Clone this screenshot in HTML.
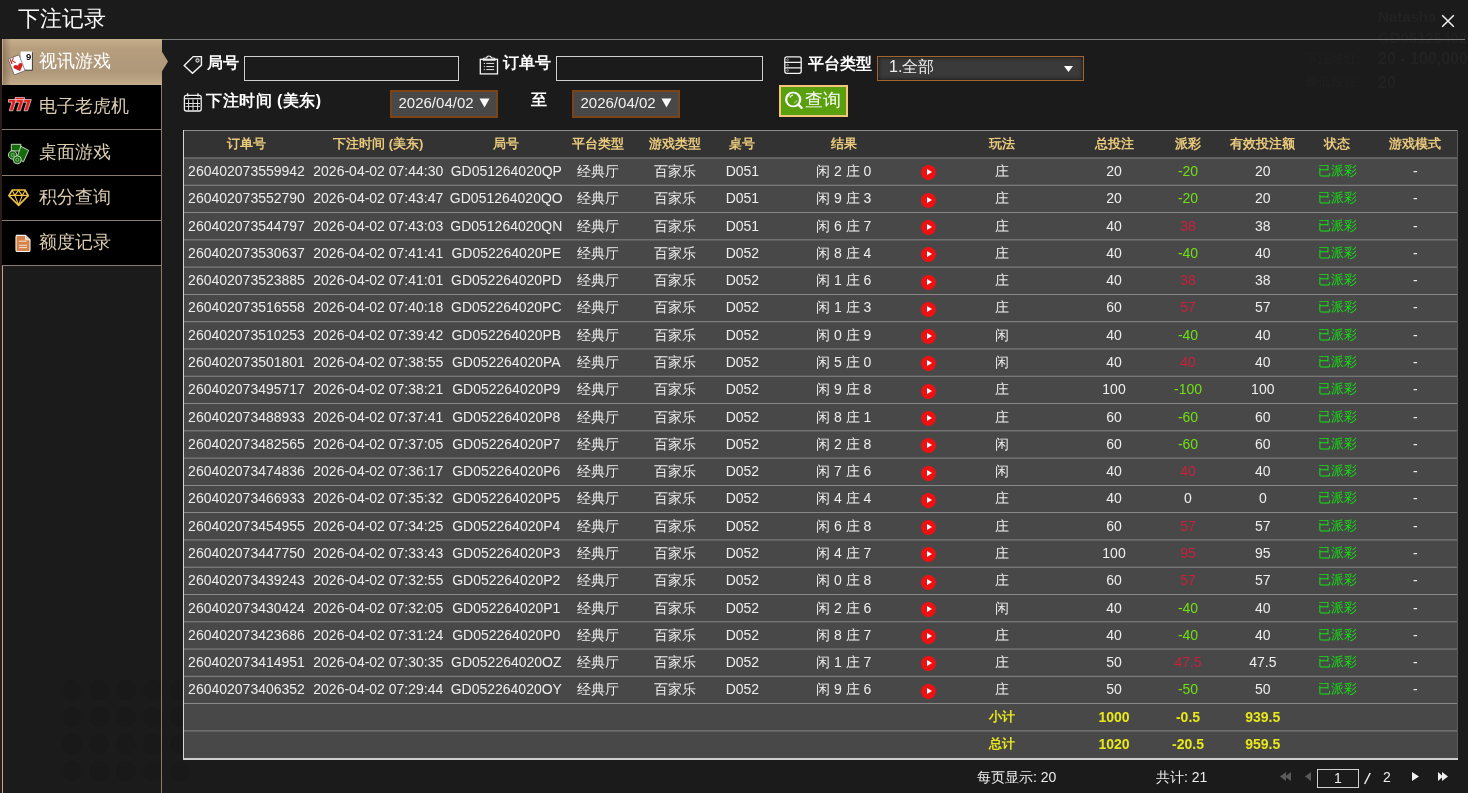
<!DOCTYPE html>
<html><head><meta charset="utf-8">
<style>
*{box-sizing:border-box}
html,body{margin:0;padding:0}
body{width:1468px;height:793px;overflow:hidden;position:relative;background:#1b1b1b;
 font-family:"Liberation Sans",sans-serif;color:#fff}
.a{position:absolute}
.c{position:absolute;width:200px;text-align:center;font-size:14px;line-height:16px;white-space:pre;color:#eee;font-weight:500}
.h{color:#e9c97c;font-weight:bold;font-size:13px}
.g{color:#6ee014}
.r{color:#c8203c}
.st{color:#14e014;font-size:13px}
.y{color:#e8e81a;font-weight:bold}
.yc{font-size:13px}
.menu{position:absolute;left:2px;width:159px;background:#000;font-size:18px;color:#dccdb0;font-weight:500}
.menu span{position:absolute;left:37px;top:0;line-height:20px}
.lbl{position:absolute;font-size:16px;font-weight:bold;color:#fff;line-height:18px;white-space:pre}
.inp{position:absolute;border:1px solid #cfcfcf;background:transparent}
.date{position:absolute;border:2px solid #7c4416;background:#484848;color:#f2f2f2;font-size:14px;line-height:16px}
.play{position:absolute;width:15px;height:15px;border-radius:50%;background:#ef1111}
.play:after{content:"";position:absolute;left:6px;top:4px;border-left:5px solid #fff;border-top:3.5px solid transparent;border-bottom:3.5px solid transparent}
</style></head><body><div id="w" style="position:absolute;left:0;top:0;width:1468px;height:793px;will-change:transform">

<div class="a" style="left:1378px;top:8px;font-size:15px;line-height:18px;font-weight:bold;color:#222222">Natasha</div>
<div class="a" style="left:1378px;top:29px;font-size:15px;line-height:18px;font-weight:bold;color:#202020">GD05126402</div>
<div class="a" style="left:1378px;top:50px;font-size:16px;line-height:18px;font-weight:bold;color:#222222">20 - 100,000</div>
<div class="a" style="left:1378px;top:74px;font-size:16px;line-height:18px;font-weight:bold;color:#222222">20</div>
<div class="a" style="left:1305px;top:50px;font-size:13px;line-height:18px;color:#202020">下注限红:</div>
<div class="a" style="left:1305px;top:73px;font-size:13px;line-height:18px;color:#202020">最低投注:</div>
<div class="a" style="left:62px;top:680px;width:20px;height:20px;border-radius:50%;background:#191919"></div>
<div class="a" style="left:89px;top:680px;width:20px;height:20px;border-radius:50%;background:#191919"></div>
<div class="a" style="left:116px;top:680px;width:20px;height:20px;border-radius:50%;background:#191919"></div>
<div class="a" style="left:143px;top:680px;width:20px;height:20px;border-radius:50%;background:#191919"></div>
<div class="a" style="left:170px;top:680px;width:20px;height:20px;border-radius:50%;background:#191919"></div>
<div class="a" style="left:62px;top:707px;width:20px;height:20px;border-radius:50%;background:#191919"></div>
<div class="a" style="left:89px;top:707px;width:20px;height:20px;border-radius:50%;background:#191919"></div>
<div class="a" style="left:116px;top:707px;width:20px;height:20px;border-radius:50%;background:#191919"></div>
<div class="a" style="left:143px;top:707px;width:20px;height:20px;border-radius:50%;background:#191919"></div>
<div class="a" style="left:170px;top:707px;width:20px;height:20px;border-radius:50%;background:#191919"></div>
<div class="a" style="left:62px;top:734px;width:20px;height:20px;border-radius:50%;background:#191919"></div>
<div class="a" style="left:89px;top:734px;width:20px;height:20px;border-radius:50%;background:#191919"></div>
<div class="a" style="left:116px;top:734px;width:20px;height:20px;border-radius:50%;background:#191919"></div>
<div class="a" style="left:143px;top:734px;width:20px;height:20px;border-radius:50%;background:#191919"></div>
<div class="a" style="left:170px;top:734px;width:20px;height:20px;border-radius:50%;background:#191919"></div>
<div class="a" style="left:62px;top:761px;width:20px;height:20px;border-radius:50%;background:#191919"></div>
<div class="a" style="left:89px;top:761px;width:20px;height:20px;border-radius:50%;background:#191919"></div>
<div class="a" style="left:116px;top:761px;width:20px;height:20px;border-radius:50%;background:#191919"></div>
<div class="a" style="left:143px;top:761px;width:20px;height:20px;border-radius:50%;background:#191919"></div>
<div class="a" style="left:170px;top:761px;width:20px;height:20px;border-radius:50%;background:#191919"></div>
<div class="a" style="left:18px;top:4.6px;font-size:22.4px;line-height:28px;color:#f8f8f8;font-weight:500">下注记录</div>
<svg class="a" style="left:1440px;top:14px" width="15" height="15" viewBox="0 0 15 15"><path d="M2.2 1.2L13.8 12.8M13.8 1.2L2.2 12.8" stroke="#f2f2f2" stroke-width="1.5"/></svg>
<div class="a" style="left:0;top:39px;width:2px;height:754px;background:#2a1d1a"></div>
<div class="a" style="left:2px;top:39px;width:1px;height:754px;background:#bfa98a"></div>
<div class="a" style="left:162px;top:39px;width:1303px;height:1px;background:#7d7d7d"></div>
<div class="a" style="left:161px;top:85px;width:1px;height:708px;background:#8b7a66"></div>
<div class="menu" style="top:85px;height:44px"><span style="top:11.0px">电子老虎机</span></div>
<div class="a" style="left:2px;top:129px;width:159px;height:1px;background:#8a7d6e"></div>
<div class="menu" style="top:130px;height:45px"><span style="top:11.5px">桌面游戏</span></div>
<div class="a" style="left:2px;top:175px;width:159px;height:1px;background:#8a7d6e"></div>
<div class="menu" style="top:176px;height:44px"><span style="top:11.0px">积分查询</span></div>
<div class="a" style="left:2px;top:220px;width:159px;height:1px;background:#8a7d6e"></div>
<div class="menu" style="top:221px;height:44px"><span style="top:11.0px">额度记录</span></div>
<div class="a" style="left:2px;top:265px;width:159px;height:1px;background:#8a7d6e"></div>
<div class="a" style="left:3px;top:39px;width:159px;height:46px;background:linear-gradient(90deg,rgba(80,60,40,.35) 0px,rgba(80,60,40,0) 8px),linear-gradient(180deg,#c7ae8c 0%,#b59d7d 22%,#af987a 70%,#c2aa8a 100%)"></div>
<svg class="a" style="left:161px;top:50px" width="8" height="23" viewBox="0 0 8 23"><path d="M0 0L7 11.5L0 23Z" fill="#b29a7b"/></svg>
<div class="a" style="left:39px;top:50px;font-size:18px;line-height:22px;color:#fff;font-weight:500">视讯游戏</div>
<div class="lbl" style="left:207px;top:54px">局号</div>
<div class="inp" style="left:244px;top:56px;width:215px;height:25px"></div>
<div class="lbl" style="left:503px;top:54px">订单号</div>
<div class="inp" style="left:556px;top:56px;width:207px;height:25px"></div>
<div class="lbl" style="left:808px;top:54.5px">平台类型</div>
<div class="a" style="left:877px;top:56px;width:207px;height:25px;border:1px solid #a4652c;background:#3a3a3a;box-shadow:inset 0 0 4px #111"></div>
<div class="a" style="left:889px;top:57px;font-size:16px;line-height:20px;color:#f0f0f0">1.全部</div>
<svg class="a" style="left:1064px;top:66px" width="10" height="7" viewBox="0 0 10 7"><path d="M0 0H9L4.5 6Z" fill="#fff"/></svg>
<div class="lbl" style="left:206px;top:92px;letter-spacing:0.5px">下注时间 (美东)</div>
<div class="date" style="left:390px;top:90px;width:108px;height:28px"></div>
<div class="a" style="left:398.5px;top:94px;font-size:15px;line-height:17px;color:#f2f2f2">2026/04/02</div>
<svg class="a" style="left:479px;top:98px" width="11" height="10" viewBox="0 0 11 10"><path d="M0.5 0.5H10.5L5.5 9.5Z" fill="#fafafa"/></svg>
<div class="date" style="left:572px;top:90px;width:108px;height:28px"></div>
<div class="a" style="left:580.5px;top:94px;font-size:15px;line-height:17px;color:#f2f2f2">2026/04/02</div>
<svg class="a" style="left:661px;top:98px" width="11" height="10" viewBox="0 0 11 10"><path d="M0.5 0.5H10.5L5.5 9.5Z" fill="#fafafa"/></svg>
<div class="lbl" style="left:531px;top:91px">至</div>
<div class="a" style="left:779px;top:85px;width:69px;height:32px;border:2px solid #f5c57c;background:#5aa00d"></div>
<div class="a" style="left:805px;top:89px;font-size:18px;line-height:22px;color:#fff">查询</div>
<svg class="a" style="left:785px;top:91px" width="20" height="20" viewBox="0 0 20 20"><circle cx="8.5" cy="8.5" r="7" fill="none" stroke="#fff" stroke-width="1.6"/><path d="M13.5 13.5L17.5 17.5" stroke="#fff" stroke-width="1.8"/><path d="M5 6.5A4 4 0 0 1 8 4" stroke="#fff" stroke-width="1.2" fill="none"/></svg>
<div class="a" style="left:183px;top:130px;width:1275px;height:630px;background:#484848"></div>
<div class="a" style="left:183px;top:130px;width:1275px;height:28px;background:#333"></div>
<div class="a" style="left:183px;top:130px;width:1275px;height:1px;background:#8a8a8a"></div>
<div class="a" style="left:183px;top:130px;width:1px;height:630px;background:#d6d6d6"></div>
<div class="a" style="left:1457px;top:130px;width:1px;height:630px;background:#5a5a5a"></div>
<div class="a" style="left:183px;top:758px;width:1275px;height:2px;background:#cfcfcf"></div>
<div class="c h" style="left:146.5px;top:136.0px">订单号</div>
<div class="c h" style="left:278.3px;top:136.0px">下注时间 (美东)</div>
<div class="c h" style="left:406.3px;top:136.0px">局号</div>
<div class="c h" style="left:497.7px;top:136.0px">平台类型</div>
<div class="c h" style="left:574.5px;top:136.0px">游戏类型</div>
<div class="c h" style="left:642.4px;top:136.0px">桌号</div>
<div class="c h" style="left:743.7px;top:136.0px">结果</div>
<div class="c h" style="left:902.0px;top:136.0px">玩法</div>
<div class="c h" style="left:1014.0px;top:136.0px">总投注</div>
<div class="c h" style="left:1088.0px;top:136.0px">派彩</div>
<div class="c h" style="left:1162.8px;top:136.0px">有效投注额</div>
<div class="c h" style="left:1237.0px;top:136.0px">状态</div>
<div class="c h" style="left:1315.4px;top:136.0px">游戏模式</div>
<div class="a" style="left:184px;top:157px;width:1273px;height:1px;background:rgba(136,136,136,0.50)"></div>
<div class="a" style="left:184px;top:158px;width:1273px;height:1px;background:rgba(136,136,136,0.50)"></div>
<div class="a" style="left:184px;top:184px;width:1273px;height:1px;background:rgba(136,136,136,0.22)"></div>
<div class="a" style="left:184px;top:185px;width:1273px;height:1px;background:rgba(136,136,136,0.78)"></div>
<div class="a" style="left:184px;top:212px;width:1273px;height:1px;background:#888"></div>
<div class="a" style="left:184px;top:239px;width:1273px;height:1px;background:rgba(136,136,136,0.66)"></div>
<div class="a" style="left:184px;top:240px;width:1273px;height:1px;background:rgba(136,136,136,0.34)"></div>
<div class="a" style="left:184px;top:266px;width:1273px;height:1px;background:rgba(136,136,136,0.38)"></div>
<div class="a" style="left:184px;top:267px;width:1273px;height:1px;background:rgba(136,136,136,0.62)"></div>
<div class="a" style="left:184px;top:294px;width:1273px;height:1px;background:#888"></div>
<div class="a" style="left:184px;top:321px;width:1273px;height:1px;background:rgba(136,136,136,0.82)"></div>
<div class="a" style="left:184px;top:322px;width:1273px;height:1px;background:rgba(136,136,136,0.18)"></div>
<div class="a" style="left:184px;top:348px;width:1273px;height:1px;background:rgba(136,136,136,0.54)"></div>
<div class="a" style="left:184px;top:349px;width:1273px;height:1px;background:rgba(136,136,136,0.46)"></div>
<div class="a" style="left:184px;top:375px;width:1273px;height:1px;background:rgba(136,136,136,0.26)"></div>
<div class="a" style="left:184px;top:376px;width:1273px;height:1px;background:rgba(136,136,136,0.74)"></div>
<div class="a" style="left:184px;top:403px;width:1273px;height:1px;background:#888"></div>
<div class="a" style="left:184px;top:430px;width:1273px;height:1px;background:rgba(136,136,136,0.70)"></div>
<div class="a" style="left:184px;top:431px;width:1273px;height:1px;background:rgba(136,136,136,0.30)"></div>
<div class="a" style="left:184px;top:457px;width:1273px;height:1px;background:rgba(136,136,136,0.42)"></div>
<div class="a" style="left:184px;top:458px;width:1273px;height:1px;background:rgba(136,136,136,0.58)"></div>
<div class="a" style="left:184px;top:485px;width:1273px;height:1px;background:#888"></div>
<div class="a" style="left:184px;top:512px;width:1273px;height:1px;background:#888"></div>
<div class="a" style="left:184px;top:539px;width:1273px;height:1px;background:rgba(136,136,136,0.58)"></div>
<div class="a" style="left:184px;top:540px;width:1273px;height:1px;background:rgba(136,136,136,0.42)"></div>
<div class="a" style="left:184px;top:566px;width:1273px;height:1px;background:rgba(136,136,136,0.30)"></div>
<div class="a" style="left:184px;top:567px;width:1273px;height:1px;background:rgba(136,136,136,0.70)"></div>
<div class="a" style="left:184px;top:594px;width:1273px;height:1px;background:#888"></div>
<div class="a" style="left:184px;top:621px;width:1273px;height:1px;background:rgba(136,136,136,0.74)"></div>
<div class="a" style="left:184px;top:622px;width:1273px;height:1px;background:rgba(136,136,136,0.26)"></div>
<div class="a" style="left:184px;top:648px;width:1273px;height:1px;background:rgba(136,136,136,0.46)"></div>
<div class="a" style="left:184px;top:649px;width:1273px;height:1px;background:rgba(136,136,136,0.54)"></div>
<div class="a" style="left:184px;top:675px;width:1273px;height:1px;background:rgba(136,136,136,0.18)"></div>
<div class="a" style="left:184px;top:676px;width:1273px;height:1px;background:rgba(136,136,136,0.82)"></div>
<div class="a" style="left:184px;top:703px;width:1273px;height:1px;background:#888"></div>
<div class="a" style="left:184px;top:730px;width:1273px;height:1px;background:rgba(136,136,136,0.62)"></div>
<div class="a" style="left:184px;top:731px;width:1273px;height:1px;background:rgba(136,136,136,0.38)"></div>
<div class="c " style="left:146.5px;top:163.0px">260402073559942</div>
<div class="c " style="left:278.3px;top:163.0px">2026-04-02 07:44:30</div>
<div class="c " style="left:406.3px;top:163.0px">GD051264020QP</div>
<div class="c " style="left:497.7px;top:163.0px">经典厅</div>
<div class="c " style="left:574.5px;top:163.0px">百家乐</div>
<div class="c " style="left:642.4px;top:163.0px">D051</div>
<div class="c " style="left:743.7px;top:163.0px">闲 2 庄 0</div>
<div class="play" style="left:921.0px;top:165.4px"></div>
<div class="c " style="left:902.0px;top:163.0px">庄</div>
<div class="c " style="left:1014.0px;top:163.0px">20</div>
<div class="c g" style="left:1088.0px;top:163.0px">-20</div>
<div class="c " style="left:1162.8px;top:163.0px">20</div>
<div class="c st" style="left:1237.0px;top:163.0px">已派彩</div>
<div class="c " style="left:1315.4px;top:163.0px">-</div>
<div class="c " style="left:146.5px;top:190.3px">260402073552790</div>
<div class="c " style="left:278.3px;top:190.3px">2026-04-02 07:43:47</div>
<div class="c " style="left:406.3px;top:190.3px">GD051264020QO</div>
<div class="c " style="left:497.7px;top:190.3px">经典厅</div>
<div class="c " style="left:574.5px;top:190.3px">百家乐</div>
<div class="c " style="left:642.4px;top:190.3px">D051</div>
<div class="c " style="left:743.7px;top:190.3px">闲 9 庄 3</div>
<div class="play" style="left:921.0px;top:192.7px"></div>
<div class="c " style="left:902.0px;top:190.3px">庄</div>
<div class="c " style="left:1014.0px;top:190.3px">20</div>
<div class="c g" style="left:1088.0px;top:190.3px">-20</div>
<div class="c " style="left:1162.8px;top:190.3px">20</div>
<div class="c st" style="left:1237.0px;top:190.3px">已派彩</div>
<div class="c " style="left:1315.4px;top:190.3px">-</div>
<div class="c " style="left:146.5px;top:217.6px">260402073544797</div>
<div class="c " style="left:278.3px;top:217.6px">2026-04-02 07:43:03</div>
<div class="c " style="left:406.3px;top:217.6px">GD051264020QN</div>
<div class="c " style="left:497.7px;top:217.6px">经典厅</div>
<div class="c " style="left:574.5px;top:217.6px">百家乐</div>
<div class="c " style="left:642.4px;top:217.6px">D051</div>
<div class="c " style="left:743.7px;top:217.6px">闲 6 庄 7</div>
<div class="play" style="left:921.0px;top:220.0px"></div>
<div class="c " style="left:902.0px;top:217.6px">庄</div>
<div class="c " style="left:1014.0px;top:217.6px">40</div>
<div class="c r" style="left:1088.0px;top:217.6px">38</div>
<div class="c " style="left:1162.8px;top:217.6px">38</div>
<div class="c st" style="left:1237.0px;top:217.6px">已派彩</div>
<div class="c " style="left:1315.4px;top:217.6px">-</div>
<div class="c " style="left:146.5px;top:244.8px">260402073530637</div>
<div class="c " style="left:278.3px;top:244.8px">2026-04-02 07:41:41</div>
<div class="c " style="left:406.3px;top:244.8px">GD052264020PE</div>
<div class="c " style="left:497.7px;top:244.8px">经典厅</div>
<div class="c " style="left:574.5px;top:244.8px">百家乐</div>
<div class="c " style="left:642.4px;top:244.8px">D052</div>
<div class="c " style="left:743.7px;top:244.8px">闲 8 庄 4</div>
<div class="play" style="left:921.0px;top:247.2px"></div>
<div class="c " style="left:902.0px;top:244.8px">庄</div>
<div class="c " style="left:1014.0px;top:244.8px">40</div>
<div class="c g" style="left:1088.0px;top:244.8px">-40</div>
<div class="c " style="left:1162.8px;top:244.8px">40</div>
<div class="c st" style="left:1237.0px;top:244.8px">已派彩</div>
<div class="c " style="left:1315.4px;top:244.8px">-</div>
<div class="c " style="left:146.5px;top:272.1px">260402073523885</div>
<div class="c " style="left:278.3px;top:272.1px">2026-04-02 07:41:01</div>
<div class="c " style="left:406.3px;top:272.1px">GD052264020PD</div>
<div class="c " style="left:497.7px;top:272.1px">经典厅</div>
<div class="c " style="left:574.5px;top:272.1px">百家乐</div>
<div class="c " style="left:642.4px;top:272.1px">D052</div>
<div class="c " style="left:743.7px;top:272.1px">闲 1 庄 6</div>
<div class="play" style="left:921.0px;top:274.5px"></div>
<div class="c " style="left:902.0px;top:272.1px">庄</div>
<div class="c " style="left:1014.0px;top:272.1px">40</div>
<div class="c r" style="left:1088.0px;top:272.1px">38</div>
<div class="c " style="left:1162.8px;top:272.1px">38</div>
<div class="c st" style="left:1237.0px;top:272.1px">已派彩</div>
<div class="c " style="left:1315.4px;top:272.1px">-</div>
<div class="c " style="left:146.5px;top:299.4px">260402073516558</div>
<div class="c " style="left:278.3px;top:299.4px">2026-04-02 07:40:18</div>
<div class="c " style="left:406.3px;top:299.4px">GD052264020PC</div>
<div class="c " style="left:497.7px;top:299.4px">经典厅</div>
<div class="c " style="left:574.5px;top:299.4px">百家乐</div>
<div class="c " style="left:642.4px;top:299.4px">D052</div>
<div class="c " style="left:743.7px;top:299.4px">闲 1 庄 3</div>
<div class="play" style="left:921.0px;top:301.8px"></div>
<div class="c " style="left:902.0px;top:299.4px">庄</div>
<div class="c " style="left:1014.0px;top:299.4px">60</div>
<div class="c r" style="left:1088.0px;top:299.4px">57</div>
<div class="c " style="left:1162.8px;top:299.4px">57</div>
<div class="c st" style="left:1237.0px;top:299.4px">已派彩</div>
<div class="c " style="left:1315.4px;top:299.4px">-</div>
<div class="c " style="left:146.5px;top:326.7px">260402073510253</div>
<div class="c " style="left:278.3px;top:326.7px">2026-04-02 07:39:42</div>
<div class="c " style="left:406.3px;top:326.7px">GD052264020PB</div>
<div class="c " style="left:497.7px;top:326.7px">经典厅</div>
<div class="c " style="left:574.5px;top:326.7px">百家乐</div>
<div class="c " style="left:642.4px;top:326.7px">D052</div>
<div class="c " style="left:743.7px;top:326.7px">闲 0 庄 9</div>
<div class="play" style="left:921.0px;top:329.1px"></div>
<div class="c " style="left:902.0px;top:326.7px">闲</div>
<div class="c " style="left:1014.0px;top:326.7px">40</div>
<div class="c g" style="left:1088.0px;top:326.7px">-40</div>
<div class="c " style="left:1162.8px;top:326.7px">40</div>
<div class="c st" style="left:1237.0px;top:326.7px">已派彩</div>
<div class="c " style="left:1315.4px;top:326.7px">-</div>
<div class="c " style="left:146.5px;top:354.0px">260402073501801</div>
<div class="c " style="left:278.3px;top:354.0px">2026-04-02 07:38:55</div>
<div class="c " style="left:406.3px;top:354.0px">GD052264020PA</div>
<div class="c " style="left:497.7px;top:354.0px">经典厅</div>
<div class="c " style="left:574.5px;top:354.0px">百家乐</div>
<div class="c " style="left:642.4px;top:354.0px">D052</div>
<div class="c " style="left:743.7px;top:354.0px">闲 5 庄 0</div>
<div class="play" style="left:921.0px;top:356.4px"></div>
<div class="c " style="left:902.0px;top:354.0px">闲</div>
<div class="c " style="left:1014.0px;top:354.0px">40</div>
<div class="c r" style="left:1088.0px;top:354.0px">40</div>
<div class="c " style="left:1162.8px;top:354.0px">40</div>
<div class="c st" style="left:1237.0px;top:354.0px">已派彩</div>
<div class="c " style="left:1315.4px;top:354.0px">-</div>
<div class="c " style="left:146.5px;top:381.2px">260402073495717</div>
<div class="c " style="left:278.3px;top:381.2px">2026-04-02 07:38:21</div>
<div class="c " style="left:406.3px;top:381.2px">GD052264020P9</div>
<div class="c " style="left:497.7px;top:381.2px">经典厅</div>
<div class="c " style="left:574.5px;top:381.2px">百家乐</div>
<div class="c " style="left:642.4px;top:381.2px">D052</div>
<div class="c " style="left:743.7px;top:381.2px">闲 9 庄 8</div>
<div class="play" style="left:921.0px;top:383.6px"></div>
<div class="c " style="left:902.0px;top:381.2px">庄</div>
<div class="c " style="left:1014.0px;top:381.2px">100</div>
<div class="c g" style="left:1088.0px;top:381.2px">-100</div>
<div class="c " style="left:1162.8px;top:381.2px">100</div>
<div class="c st" style="left:1237.0px;top:381.2px">已派彩</div>
<div class="c " style="left:1315.4px;top:381.2px">-</div>
<div class="c " style="left:146.5px;top:408.5px">260402073488933</div>
<div class="c " style="left:278.3px;top:408.5px">2026-04-02 07:37:41</div>
<div class="c " style="left:406.3px;top:408.5px">GD052264020P8</div>
<div class="c " style="left:497.7px;top:408.5px">经典厅</div>
<div class="c " style="left:574.5px;top:408.5px">百家乐</div>
<div class="c " style="left:642.4px;top:408.5px">D052</div>
<div class="c " style="left:743.7px;top:408.5px">闲 8 庄 1</div>
<div class="play" style="left:921.0px;top:410.9px"></div>
<div class="c " style="left:902.0px;top:408.5px">庄</div>
<div class="c " style="left:1014.0px;top:408.5px">60</div>
<div class="c g" style="left:1088.0px;top:408.5px">-60</div>
<div class="c " style="left:1162.8px;top:408.5px">60</div>
<div class="c st" style="left:1237.0px;top:408.5px">已派彩</div>
<div class="c " style="left:1315.4px;top:408.5px">-</div>
<div class="c " style="left:146.5px;top:435.8px">260402073482565</div>
<div class="c " style="left:278.3px;top:435.8px">2026-04-02 07:37:05</div>
<div class="c " style="left:406.3px;top:435.8px">GD052264020P7</div>
<div class="c " style="left:497.7px;top:435.8px">经典厅</div>
<div class="c " style="left:574.5px;top:435.8px">百家乐</div>
<div class="c " style="left:642.4px;top:435.8px">D052</div>
<div class="c " style="left:743.7px;top:435.8px">闲 2 庄 8</div>
<div class="play" style="left:921.0px;top:438.2px"></div>
<div class="c " style="left:902.0px;top:435.8px">闲</div>
<div class="c " style="left:1014.0px;top:435.8px">60</div>
<div class="c g" style="left:1088.0px;top:435.8px">-60</div>
<div class="c " style="left:1162.8px;top:435.8px">60</div>
<div class="c st" style="left:1237.0px;top:435.8px">已派彩</div>
<div class="c " style="left:1315.4px;top:435.8px">-</div>
<div class="c " style="left:146.5px;top:463.1px">260402073474836</div>
<div class="c " style="left:278.3px;top:463.1px">2026-04-02 07:36:17</div>
<div class="c " style="left:406.3px;top:463.1px">GD052264020P6</div>
<div class="c " style="left:497.7px;top:463.1px">经典厅</div>
<div class="c " style="left:574.5px;top:463.1px">百家乐</div>
<div class="c " style="left:642.4px;top:463.1px">D052</div>
<div class="c " style="left:743.7px;top:463.1px">闲 7 庄 6</div>
<div class="play" style="left:921.0px;top:465.5px"></div>
<div class="c " style="left:902.0px;top:463.1px">闲</div>
<div class="c " style="left:1014.0px;top:463.1px">40</div>
<div class="c r" style="left:1088.0px;top:463.1px">40</div>
<div class="c " style="left:1162.8px;top:463.1px">40</div>
<div class="c st" style="left:1237.0px;top:463.1px">已派彩</div>
<div class="c " style="left:1315.4px;top:463.1px">-</div>
<div class="c " style="left:146.5px;top:490.4px">260402073466933</div>
<div class="c " style="left:278.3px;top:490.4px">2026-04-02 07:35:32</div>
<div class="c " style="left:406.3px;top:490.4px">GD052264020P5</div>
<div class="c " style="left:497.7px;top:490.4px">经典厅</div>
<div class="c " style="left:574.5px;top:490.4px">百家乐</div>
<div class="c " style="left:642.4px;top:490.4px">D052</div>
<div class="c " style="left:743.7px;top:490.4px">闲 4 庄 4</div>
<div class="play" style="left:921.0px;top:492.8px"></div>
<div class="c " style="left:902.0px;top:490.4px">庄</div>
<div class="c " style="left:1014.0px;top:490.4px">40</div>
<div class="c " style="left:1088.0px;top:490.4px">0</div>
<div class="c " style="left:1162.8px;top:490.4px">0</div>
<div class="c st" style="left:1237.0px;top:490.4px">已派彩</div>
<div class="c " style="left:1315.4px;top:490.4px">-</div>
<div class="c " style="left:146.5px;top:517.6px">260402073454955</div>
<div class="c " style="left:278.3px;top:517.6px">2026-04-02 07:34:25</div>
<div class="c " style="left:406.3px;top:517.6px">GD052264020P4</div>
<div class="c " style="left:497.7px;top:517.6px">经典厅</div>
<div class="c " style="left:574.5px;top:517.6px">百家乐</div>
<div class="c " style="left:642.4px;top:517.6px">D052</div>
<div class="c " style="left:743.7px;top:517.6px">闲 6 庄 8</div>
<div class="play" style="left:921.0px;top:520.0px"></div>
<div class="c " style="left:902.0px;top:517.6px">庄</div>
<div class="c " style="left:1014.0px;top:517.6px">60</div>
<div class="c r" style="left:1088.0px;top:517.6px">57</div>
<div class="c " style="left:1162.8px;top:517.6px">57</div>
<div class="c st" style="left:1237.0px;top:517.6px">已派彩</div>
<div class="c " style="left:1315.4px;top:517.6px">-</div>
<div class="c " style="left:146.5px;top:544.9px">260402073447750</div>
<div class="c " style="left:278.3px;top:544.9px">2026-04-02 07:33:43</div>
<div class="c " style="left:406.3px;top:544.9px">GD052264020P3</div>
<div class="c " style="left:497.7px;top:544.9px">经典厅</div>
<div class="c " style="left:574.5px;top:544.9px">百家乐</div>
<div class="c " style="left:642.4px;top:544.9px">D052</div>
<div class="c " style="left:743.7px;top:544.9px">闲 4 庄 7</div>
<div class="play" style="left:921.0px;top:547.3px"></div>
<div class="c " style="left:902.0px;top:544.9px">庄</div>
<div class="c " style="left:1014.0px;top:544.9px">100</div>
<div class="c r" style="left:1088.0px;top:544.9px">95</div>
<div class="c " style="left:1162.8px;top:544.9px">95</div>
<div class="c st" style="left:1237.0px;top:544.9px">已派彩</div>
<div class="c " style="left:1315.4px;top:544.9px">-</div>
<div class="c " style="left:146.5px;top:572.2px">260402073439243</div>
<div class="c " style="left:278.3px;top:572.2px">2026-04-02 07:32:55</div>
<div class="c " style="left:406.3px;top:572.2px">GD052264020P2</div>
<div class="c " style="left:497.7px;top:572.2px">经典厅</div>
<div class="c " style="left:574.5px;top:572.2px">百家乐</div>
<div class="c " style="left:642.4px;top:572.2px">D052</div>
<div class="c " style="left:743.7px;top:572.2px">闲 0 庄 8</div>
<div class="play" style="left:921.0px;top:574.6px"></div>
<div class="c " style="left:902.0px;top:572.2px">庄</div>
<div class="c " style="left:1014.0px;top:572.2px">60</div>
<div class="c r" style="left:1088.0px;top:572.2px">57</div>
<div class="c " style="left:1162.8px;top:572.2px">57</div>
<div class="c st" style="left:1237.0px;top:572.2px">已派彩</div>
<div class="c " style="left:1315.4px;top:572.2px">-</div>
<div class="c " style="left:146.5px;top:599.5px">260402073430424</div>
<div class="c " style="left:278.3px;top:599.5px">2026-04-02 07:32:05</div>
<div class="c " style="left:406.3px;top:599.5px">GD052264020P1</div>
<div class="c " style="left:497.7px;top:599.5px">经典厅</div>
<div class="c " style="left:574.5px;top:599.5px">百家乐</div>
<div class="c " style="left:642.4px;top:599.5px">D052</div>
<div class="c " style="left:743.7px;top:599.5px">闲 2 庄 6</div>
<div class="play" style="left:921.0px;top:601.9px"></div>
<div class="c " style="left:902.0px;top:599.5px">闲</div>
<div class="c " style="left:1014.0px;top:599.5px">40</div>
<div class="c g" style="left:1088.0px;top:599.5px">-40</div>
<div class="c " style="left:1162.8px;top:599.5px">40</div>
<div class="c st" style="left:1237.0px;top:599.5px">已派彩</div>
<div class="c " style="left:1315.4px;top:599.5px">-</div>
<div class="c " style="left:146.5px;top:626.8px">260402073423686</div>
<div class="c " style="left:278.3px;top:626.8px">2026-04-02 07:31:24</div>
<div class="c " style="left:406.3px;top:626.8px">GD052264020P0</div>
<div class="c " style="left:497.7px;top:626.8px">经典厅</div>
<div class="c " style="left:574.5px;top:626.8px">百家乐</div>
<div class="c " style="left:642.4px;top:626.8px">D052</div>
<div class="c " style="left:743.7px;top:626.8px">闲 8 庄 7</div>
<div class="play" style="left:921.0px;top:629.2px"></div>
<div class="c " style="left:902.0px;top:626.8px">庄</div>
<div class="c " style="left:1014.0px;top:626.8px">40</div>
<div class="c g" style="left:1088.0px;top:626.8px">-40</div>
<div class="c " style="left:1162.8px;top:626.8px">40</div>
<div class="c st" style="left:1237.0px;top:626.8px">已派彩</div>
<div class="c " style="left:1315.4px;top:626.8px">-</div>
<div class="c " style="left:146.5px;top:654.0px">260402073414951</div>
<div class="c " style="left:278.3px;top:654.0px">2026-04-02 07:30:35</div>
<div class="c " style="left:406.3px;top:654.0px">GD052264020OZ</div>
<div class="c " style="left:497.7px;top:654.0px">经典厅</div>
<div class="c " style="left:574.5px;top:654.0px">百家乐</div>
<div class="c " style="left:642.4px;top:654.0px">D052</div>
<div class="c " style="left:743.7px;top:654.0px">闲 1 庄 7</div>
<div class="play" style="left:921.0px;top:656.4px"></div>
<div class="c " style="left:902.0px;top:654.0px">庄</div>
<div class="c " style="left:1014.0px;top:654.0px">50</div>
<div class="c r" style="left:1088.0px;top:654.0px">47.5</div>
<div class="c " style="left:1162.8px;top:654.0px">47.5</div>
<div class="c st" style="left:1237.0px;top:654.0px">已派彩</div>
<div class="c " style="left:1315.4px;top:654.0px">-</div>
<div class="c " style="left:146.5px;top:681.3px">260402073406352</div>
<div class="c " style="left:278.3px;top:681.3px">2026-04-02 07:29:44</div>
<div class="c " style="left:406.3px;top:681.3px">GD052264020OY</div>
<div class="c " style="left:497.7px;top:681.3px">经典厅</div>
<div class="c " style="left:574.5px;top:681.3px">百家乐</div>
<div class="c " style="left:642.4px;top:681.3px">D052</div>
<div class="c " style="left:743.7px;top:681.3px">闲 9 庄 6</div>
<div class="play" style="left:921.0px;top:683.7px"></div>
<div class="c " style="left:902.0px;top:681.3px">庄</div>
<div class="c " style="left:1014.0px;top:681.3px">50</div>
<div class="c g" style="left:1088.0px;top:681.3px">-50</div>
<div class="c " style="left:1162.8px;top:681.3px">50</div>
<div class="c st" style="left:1237.0px;top:681.3px">已派彩</div>
<div class="c " style="left:1315.4px;top:681.3px">-</div>
<div class="c y yc" style="left:902.0px;top:709.1px">小计</div>
<div class="c y" style="left:1014.0px;top:708.6px">1000</div>
<div class="c y" style="left:1088.0px;top:708.6px">-0.5</div>
<div class="c y" style="left:1162.8px;top:708.6px">939.5</div>
<div class="c y yc" style="left:902.0px;top:736.4px">总计</div>
<div class="c y" style="left:1014.0px;top:735.9px">1020</div>
<div class="c y" style="left:1088.0px;top:735.9px">-20.5</div>
<div class="c y" style="left:1162.8px;top:735.9px">959.5</div>
<svg class="a" style="left:182px;top:54px" width="22" height="22" viewBox="182 54 22 22"><path d="M184.2 65.4L193.2 56.6H201.4V65.1L192.5 73.2Z" fill="none" stroke="#f4f4f4" stroke-width="1.4" stroke-linejoin="miter"/><circle cx="197.5" cy="60.5" r="1.6" fill="none" stroke="#d8d8d8" stroke-width="1.1"/></svg>
<svg class="a" style="left:182px;top:92px" width="22" height="22" viewBox="182 92 22 22"><rect x="184.4" y="95.3" width="16.8" height="15.7" rx="2" fill="#050505" stroke="#f4f4f4" stroke-width="1.3"/><path d="M184.4 98.6H201.2" stroke="#d8d8d8" stroke-width="1.4"/><path d="M187.6 93.3V96.6M198 93.3V96.6" stroke="#f4f4f4" stroke-width="1.4"/><path d="M185.5 103.5H200M185.5 106.4H200M188.6 99.5V110.5M193 99.5V110.5M197.6 99.5V110.5" stroke="#e0e0e0" stroke-width="1"/></svg>
<svg class="a" style="left:478px;top:54px" width="22" height="22" viewBox="478 54 22 22"><rect x="480.3" y="59.3" width="17.2" height="14.6" fill="none" stroke="#f4f4f4" stroke-width="1.3"/><path d="M483.3 60.2H495V59.2Q495 58 493.5 58H491.5Q491 56 489 56Q487 56 486.5 58H484.8Q483.3 58 483.3 59.2Z" fill="none" stroke="#f4f4f4" stroke-width="1.2"/><path d="M486.3 63.4H494.2M486.3 66.6H494.2M486.3 69.6H494.2" stroke="#e8e8e8" stroke-width="1"/><circle cx="484.4" cy="63.4" r="0.7" fill="#ddd"/><circle cx="484.4" cy="66.6" r="0.7" fill="#ddd"/><circle cx="484.4" cy="69.6" r="0.7" fill="#ddd"/></svg>
<svg class="a" style="left:782px;top:54px" width="22" height="22" viewBox="782 54 22 22"><rect x="784.8" y="56.9" width="16.4" height="16.4" rx="2" fill="none" stroke="#f4f4f4" stroke-width="1.3"/><path d="M784.8 62.4H801.2M784.8 67.8H801.2" stroke="#f4f4f4" stroke-width="1.3"/><circle cx="787.6" cy="59.7" r="0.9" fill="none" stroke="#bbb" stroke-width="0.7"/><circle cx="787.6" cy="65.1" r="0.9" fill="none" stroke="#bbb" stroke-width="0.7"/><circle cx="787.6" cy="70.5" r="0.9" fill="none" stroke="#bbb" stroke-width="0.7"/></svg>
<svg class="a" style="left:782px;top:89px" width="22" height="22" viewBox="782 89 22 22"><circle cx="792.6" cy="99.4" r="7" fill="none" stroke="#f6f6f6" stroke-width="1.3"/><path d="M797.6 104.4L801.6 108.6" stroke="#f6f6f6" stroke-width="1.4"/><path d="M788.2 97.2Q788.8 95.8 790 95.3M794 103.2Q796 102.3 797 100.2" stroke="#e8f0e0" stroke-width="0.7" fill="none"/></svg>
<svg class="a" style="left:4px;top:48px" width="34" height="30" viewBox="4 48 34 30"><rect x="20.6" y="51.6" width="11.8" height="18.6" rx="0.8" fill="#fff"/><path d="M32.4 52.2V70.2H22" fill="none" stroke="#2a2a2a" stroke-width="0.9"/><text x="26" y="59.6" font-family="Liberation Sans" font-weight="bold" font-size="9.5" fill="#111">9</text><g transform="rotate(-21 16.65 64.85)"><rect x="10.85" y="56.4" width="11.6" height="16.9" rx="0.8" fill="#fff" stroke="#333" stroke-width="0.5"/><text x="11.6" y="62.6" font-family="Liberation Sans" font-weight="bold" font-size="7.8" fill="#d42121">K</text><path d="M17.6 71.8L13.4 67.9Q12 66.2 13.4 64.8Q15.3 63.6 17.6 65.8Q19.9 63.6 21.6 64.8Q23 66.2 21.6 67.9Z" fill="#d42121"/></g></svg>
<svg class="a" style="left:6px;top:95px" width="28" height="18" viewBox="6 95 28 18"><path d="M15 97.5H24.5V99.8H15Z" fill="#e82020" stroke="#fff" stroke-width="0.6"/><path d="M8.5 99.5H16.5L12.8 110.8H9.2L12 102.2H8.5Z" fill="#e02020" stroke="#f3dcdc" stroke-width="0.7"/><path d="M16 99.5H24L20.3 110.8H16.7L19.5 102.2H16Z" fill="#e02020" stroke="#f3dcdc" stroke-width="0.7"/><path d="M23.3 99.5H31.3L27.6 110.8H24L26.8 102.2H23.3Z" fill="#e02020" stroke="#f3dcdc" stroke-width="0.7"/></svg>
<svg class="a" style="left:6px;top:141px" width="26" height="26" viewBox="6 141 26 26"><path d="M11.3 144.3H21L20.2 151H11.3Z" fill="#146b0a" stroke="#cfe3cc" stroke-width="0.9"/><path d="M20.8 146.3L28.6 150.3L23.5 161.8L16.7 158.3Z" fill="#146b0a" stroke="#cfe3cc" stroke-width="0.9"/><circle cx="12.6" cy="155" r="4.2" fill="#146b0a" stroke="#cfe3cc" stroke-width="0.9"/><circle cx="17.3" cy="159.8" r="4" fill="#146b0a" stroke="#cfe3cc" stroke-width="0.9"/><circle cx="12.6" cy="155" r="1.6" fill="none" stroke="#cfe3cc" stroke-width="0.6"/><circle cx="17.3" cy="159.8" r="1.6" fill="none" stroke="#cfe3cc" stroke-width="0.6"/></svg>
<svg class="a" style="left:6px;top:187px" width="26" height="22" viewBox="6 187 26 22"><path d="M12.3 190H25L28.3 195.6L18.6 205.4L8.8 195.6Z" fill="none" stroke="#f2c344" stroke-width="1.5" stroke-linejoin="round"/><path d="M9.2 195.4H28M14.8 195.4L18.6 205M22.3 195.4L18.6 205M12.3 190.4L14.8 195.4L18.5 190.4L22.3 195.4L25 190.4" fill="none" stroke="#f2c344" stroke-width="1.1"/></svg>
<svg class="a" style="left:13px;top:232px" width="20" height="22" viewBox="13 232 20 22"><path d="M16 235.4H25.5L30 239.8V250.2Q30 251.5 28.7 251.5H17.3Q16 251.5 16 250.2V236.7Q16 235.4 17.3 235.4Z" fill="#d4844a" stroke="#f5f5f5" stroke-width="1.1"/><path d="M25.5 235.4V239.8H30" fill="#f0c8a0" stroke="#f5f5f5" stroke-width="0.8"/><path d="M19 241.2H26.5M19 245.3H27M19 247.6H27" stroke="#f6e2d0" stroke-width="1"/></svg>
<div class="a" style="left:977px;top:769px;font-size:14px;line-height:16px;color:#eee">每页显示: 20</div>
<div class="a" style="left:1156px;top:769px;font-size:14px;line-height:16px;color:#eee">共计: 21</div>
<svg class="a" style="left:1280px;top:772px" width="32" height="10" viewBox="0 0 32 10"><path d="M6 0V9L0 4.5Z M11 0V9L5 4.5Z M31 0V9L25 4.5Z" fill="#5a5a5a"/></svg>
<div class="a" style="left:1317px;top:769px;width:42px;height:19px;border:1px solid #cfcfcf"></div>
<div class="a" style="left:1317px;top:770px;width:42px;text-align:center;font-size:14px;line-height:16px;color:#eee">1</div>
<svg class="a" style="left:1362px;top:771px" width="10" height="15" viewBox="1362 771 10 15"><path d="M1370.2 773L1364.6 784" stroke="#eee" stroke-width="1.5"/></svg>
<div class="a" style="left:1383px;top:769px;font-size:14px;line-height:16px;color:#eee">2</div>
<svg class="a" style="left:1412px;top:772px" width="36" height="10" viewBox="0 0 36 10"><path d="M0 0V9L7 4.5Z M26 0V9L31 4.5Z M30 0V9L36 4.5Z" fill="#f0f0f0"/></svg>
</div></body></html>
